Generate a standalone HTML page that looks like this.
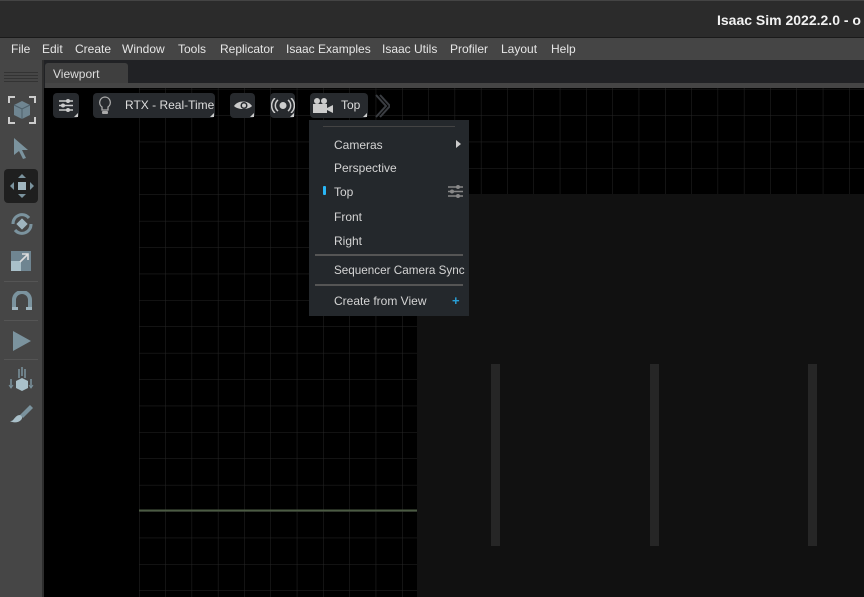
<!DOCTYPE html>
<html><head><meta charset="utf-8"><style>
*{margin:0;padding:0;box-sizing:border-box}
body{width:864px;height:597px;overflow:hidden;background:#000;font-family:"Liberation Sans",sans-serif;position:relative}
.abs{position:absolute}
#title{left:0;top:0;width:864px;height:38px;background:#2b2b2b;border-top:1px solid #444;border-bottom:1px solid #1a1a1a}
#title span{position:absolute;left:717px;top:11px;color:#f2f2f2;font-weight:bold;font-size:14px;white-space:nowrap}
#menu{left:0;top:38px;width:864px;height:22px;background:#454545;color:#e6e6e6;font-size:12px}
#menu span{position:absolute;top:4px;white-space:nowrap}
#tabrow{left:0;top:60px;width:864px;height:28px;background:#212225}
#lt{left:0;top:60px;width:44px;height:537px;background:#464646;border-right:2px solid #2e2e2e}
#tab{left:45px;top:63px;width:83px;height:21px;background:#3f3f3f;border-radius:3px 3px 0 0;color:#ddd;font-size:12px;padding:4px 0 0 8px}
#strip{left:45px;top:83px;width:819px;height:5px;background:#454545}
#vp{left:49px;top:88px;width:815px;height:509px;background:#000;overflow:hidden}
.btn{position:absolute;top:93px;height:25px;background:#272a2e;border-radius:4px;color:#ddd;font-size:12px}
.btn:after{content:"";position:absolute;right:1px;bottom:1px;border-left:4px solid transparent;border-bottom:4px solid #ccc}
#pop{left:309px;top:120px;width:160px;height:196px;background:#24282c;color:#d4d4d4;font-size:12px}
#pop .it{position:absolute;left:25px;white-space:nowrap}
.sep{position:absolute;height:2px;background:#555}
.ico{position:absolute;left:8px}
.hs{position:absolute;left:4px;width:34px;height:1px;background:#555}
</style></head><body>
<div id="title" class="abs"><span>Isaac Sim 2022.2.0 - o</span></div>
<div id="menu" class="abs">
<span style="left:11px">File</span><span style="left:42px">Edit</span><span style="left:75px">Create</span><span style="left:122px">Window</span><span style="left:178px">Tools</span><span style="left:220px">Replicator</span><span style="left:286px">Isaac Examples</span><span style="left:382px">Isaac Utils</span><span style="left:450px">Profiler</span><span style="left:501px">Layout</span><span style="left:551px">Help</span>
</div>
<div id="tabrow" class="abs"></div>
<div id="lt" class="abs">
 <div class="abs" style="left:4px;top:12px;width:34px;height:1px;background:#333;box-shadow:0 3px 0 #333,0 6px 0 #333,0 9px 0 #333"></div>
 <svg class="ico" style="top:36px" width="28" height="28" viewBox="0 0 28 28"><path d="M1 7V1h6M21 1h6v6M27 21v6h-6M7 27H1v-6" stroke="#ccc" stroke-width="2" fill="none"/><path d="M14 5l8 4v10l-8 4-8-4V9z" fill="#6f8591"/><path d="M6 9l8 4 8-4M14 13v10" stroke="#4d5f69" fill="none"/></svg>
 <svg class="ico" style="top:76px;left:12px" width="22" height="26"><path d="M2 2l14 12h-6l4 8-3 1-4-8-5 4z" fill="#7b939e"/></svg>
 <div class="abs" style="left:4px;top:109px;width:34px;height:34px;background:#1f1f1f;border-radius:4px"></div>
 <svg class="ico" style="top:112px;left:9px" width="26" height="28"><rect x="9" y="10" width="8" height="8" fill="#9fb5bf"/><path d="M13 2l4 4h-8zM13 26l4-4h-8zM1 14l4-4v8zM25 14l-4-4v8z" fill="#7b939e"/></svg>
 <svg class="ico" style="top:151px;left:9px" width="26" height="26"><path d="M4 13a9 9 0 0 1 16-6M22 13a9 9 0 0 1-16 6" stroke="#7b939e" stroke-width="3" fill="none"/><rect x="9" y="9" width="8" height="8" transform="rotate(45 13 13)" fill="#9fb5bf"/></svg>
 <svg class="ico" style="top:191px;left:11px" width="22" height="22"><rect x="0" y="0" width="20" height="20" fill="#6f8591"/><rect x="0" y="10" width="10" height="10" fill="#a9c0c9"/><path d="M9 11l8-8M11 3h6v6" stroke="#ddd" stroke-width="1.6" fill="none"/></svg>
 <div class="hs" style="top:221px"></div>
 <svg class="ico" style="top:231px;left:12px" width="20" height="20"><path d="M2 16V9a8 8 0 0 1 16 0v7" stroke="#7b939e" stroke-width="4" fill="none"/><rect x="0" y="16" width="6" height="3" fill="#9fb5bf"/><rect x="14" y="16" width="6" height="3" fill="#9fb5bf"/></svg>
 <div class="hs" style="top:260px"></div>
 <svg class="ico" style="top:270px;left:12px" width="20" height="22"><path d="M1 1l18 10-18 10z" fill="#7b939e"/></svg>
 <div class="hs" style="top:299px"></div>
 <svg class="ico" style="top:307px;left:8px" width="26" height="26"><path d="M11 2v9M14 0v9M17 2v9M3 12v8M23 12v8" stroke="#7b939e" stroke-width="1.5"/><path d="M1 18l2 3 2-3M21 18l2 3 2-3" stroke="#7b939e" fill="none"/><path d="M14 11l6 3v7l-6 3-6-3v-7z" fill="#a9c0c9"/></svg>
 <svg class="ico" style="top:343px;left:8px" width="26" height="22"><path d="M12 12l10-10 3 3-10 10z" fill="#7b939e"/><path d="M3 18c3 0 4-6 9-6 2 1 3 3 1 5-3 3-8 3-11 1z" fill="#a9c0c9"/></svg>
</div>
<div id="tab" class="abs">Viewport</div>
<div id="strip" class="abs"></div>
<div id="vp" class="abs">
 <svg width="815" height="509" style="position:absolute;left:0;top:0">
  <defs>
   <pattern id="g" x="90" y="53.7" width="26.3" height="26.4" patternUnits="userSpaceOnUse"><path d="M0 0V26.4M0 0H26.3" stroke="#262626" stroke-width="1"/></pattern>
  </defs>
  <rect x="90" y="0" width="725" height="509" fill="url(#g)"/>
  <rect x="368" y="106" width="447" height="403" fill="#111"/>
  <line x1="90" y1="422.5" x2="368" y2="422.5" stroke="#4b5b43" stroke-width="2"/>
  <rect x="442" y="276" width="9" height="182" fill="#262626"/>
  <rect x="601" y="276" width="9" height="182" fill="#262626"/>
  <rect x="759" y="276" width="9" height="182" fill="#262626"/>
 </svg>
</div>
<div class="btn" style="left:53px;width:26px"><svg style="position:absolute;left:5px;top:5px" width="16" height="15"><path d="M1 3h14M1 7.5h14M1 12h14" stroke="#ccc" stroke-width="1.5"/><circle cx="10" cy="3" r="2" fill="#ccc"/><circle cx="5" cy="7.5" r="2" fill="#ccc"/><circle cx="10" cy="12" r="2" fill="#ccc"/></svg></div>
<div class="btn" style="left:93px;width:122px"><svg style="position:absolute;left:5px;top:3px" width="14" height="19"><path d="M7 1a5.5 5.5 0 0 0-3 10v3h6v-3A5.5 5.5 0 0 0 7 1z" stroke="#aaa" stroke-width="1.3" fill="none"/><rect x="4" y="15" width="6" height="3" rx="1" fill="#aaa"/></svg><span style="position:absolute;left:32px;top:5px">RTX - Real-Time</span></div>
<div class="btn" style="left:230px;width:25px"><svg style="position:absolute;left:3px;top:6px" width="20" height="13"><path d="M1 7C5 1 15 1 19 7 15 11 5 11 1 7z" fill="#ccc"/><circle cx="11" cy="6.5" r="3.5" fill="#272a2e"/><circle cx="11" cy="6.5" r="2" fill="#ccc"/></svg></div>
<div class="btn" style="left:270px;width:25px"><svg style="position:absolute;left:1px;top:5px" width="24" height="15"><circle cx="12" cy="7.5" r="3.5" fill="#ccc"/><path d="M7 2a7 7 0 0 0 0 11M17 2a7 7 0 0 1 0 11M4 0a10 10 0 0 0 0 15M20 0a10 10 0 0 1 0 15" stroke="#ccc" stroke-width="1.5" fill="none"/></svg></div>
<div class="btn" style="left:310px;width:58px"><svg style="position:absolute;left:2px;top:4px" width="22" height="17"><circle cx="5" cy="4" r="3" fill="#ccc"/><circle cx="12" cy="4" r="3" fill="#ccc"/><rect x="1" y="7" width="14" height="9" fill="#ccc"/><path d="M15 11l6-3v8l-6-3z" fill="#ccc"/></svg><span style="position:absolute;left:31px;top:5px">Top</span></div>
<svg class="abs" style="left:374px;top:94px" width="16" height="24"><path d="M2 1l10 11-10 11M6 1l10 11-10 11" stroke="#3a3d42" stroke-width="2" fill="none"/></svg>
<div id="pop" class="abs">
 <div class="sep" style="left:14px;top:6px;width:132px;height:1px;background:#444"></div>
 <div class="it" style="top:18px">Cameras</div>
 <div class="abs" style="left:147px;top:20px;border-left:5px solid #ccc;border-top:4px solid transparent;border-bottom:4px solid transparent"></div>
 <div class="it" style="top:41px">Perspective</div>
 <div class="abs" style="left:14px;top:66px;width:3px;height:9px;background:#29b6f6;border-radius:1px"></div>
 <div class="it" style="top:65px">Top</div>
 <svg class="abs" style="left:138px;top:64px" width="17" height="15"><path d="M1 3h15M1 7.5h15M1 12h15" stroke="#888" stroke-width="1.5"/><circle cx="11" cy="3" r="2" fill="#888"/><circle cx="5" cy="7.5" r="2" fill="#888"/><circle cx="11" cy="12" r="2" fill="#888"/></svg>
 <div class="it" style="top:90px">Front</div>
 <div class="it" style="top:114px">Right</div>
 <div class="sep" style="left:6px;top:134px;width:148px"></div>
 <div class="it" style="top:144px;font-size:11.7px">Sequencer Camera Sync</div>
 <div class="sep" style="left:6px;top:164px;width:148px"></div>
 <div class="it" style="top:174px">Create from View</div>
 <div class="abs" style="left:143px;top:173px;color:#29a0d8;font-weight:bold;font-size:13px">+</div>
</div>
</body></html>
